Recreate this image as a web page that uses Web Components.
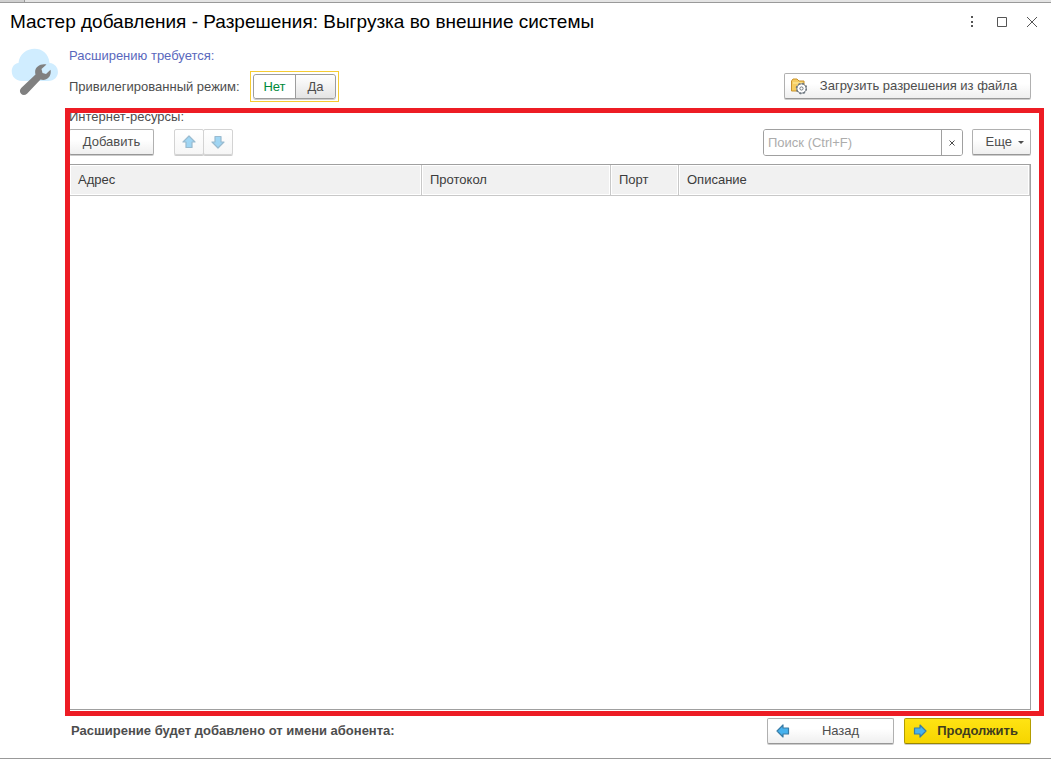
<!DOCTYPE html>
<html lang="ru">
<head>
<meta charset="utf-8">
<title>Мастер добавления</title>
<style>
html, body { height: 100%; }
body { margin: 0; background: #fff; font: 13px/16px "Liberation Sans", Arial, sans-serif; color: #4d4d4d; }
</style>
</head>
<body>
<wizard-window heading="Мастер добавления - Разрешения: Выгрузка во внешние системы">
  <permission-summary></permission-summary>
  <resource-list></resource-list>
  <wizard-footer></wizard-footer>
</wizard-window>
<script>
const define = (name, html, setup) => {
  const template = document.createElement("template");
  template.innerHTML = html;
  customElements.define(name, class extends HTMLElement {
    constructor() {
      super();
      this.attachShadow({ mode: "open" }).append(template.content.cloneNode(true));
    }
    connectedCallback() { if (setup) setup(this, this.shadowRoot); }
  });
};

define("blue-arrow", `
<style>
:host { display: block; flex: none; width: 14px; height: 14px; }
:host([direction="up"]) { transform: rotate(90deg); }
:host([direction="down"]) { transform: rotate(-90deg); }
:host([direction="right"]) { transform: rotate(180deg); }
:host([faded]) { opacity: .5; }
svg { display: block; }
</style>
<svg width="14" height="14" viewBox="0 0 14 14" aria-hidden="true"><path d="M1 7L7 1V4H12.500V10H7V13Z" fill="#47b2ee" stroke="#3a7ca5" stroke-width="1.200" stroke-linejoin="round"/></svg>`);

define("push-button", `
<style>
:host { display: block; }
button { box-sizing: border-box; display: flex; align-items: center; justify-content: center; gap: 6px; width: 100%; height: 26px; margin: 0; padding: 0 6px; border: 1px solid #b0b0b0; border-bottom-color: #979797; border-radius: 2px; background: linear-gradient(#fff 40%, #efefef); box-shadow: 0 1px 0 #ccc; font: inherit; color: #4d4d4d; white-space: nowrap; }
:host([kind="primary"]) button, :host([kind="nav"]) button { padding: 0 8px; }
:host([kind="primary"]) button { border-color: #b39d00; border-bottom-color: #9a8700; background: linear-gradient(#ffe313, #f6d500); font-weight: bold; color: #403c1e; }
:host([kind="disabled"]) button { border-color: #d3d3d3; background: linear-gradient(#fff, #f6f6f6); padding: 0; }
span { flex: 1; text-align: center; }
:host([kind="disabled"]) span { display: none; }
:host([kind="menu"]) span { text-align: right; }
::slotted(svg) { flex: none; }
</style>
<button type="button"><slot name="icon"></slot><span><slot></slot></span><slot name="after"></slot></button>`,
(host, root) => {
  const b = root.querySelector("button");
  b.disabled = host.getAttribute("kind") === "disabled";
  if (host.hasAttribute("label")) b.setAttribute("aria-label", host.getAttribute("label"));
});

define("wizard-window", `
<style>
:host { box-sizing: border-box; display: flex; flex-direction: column; min-height: 100%; border-bottom: 1px solid #999; }
.strip { height: 2px; background: linear-gradient(90deg, #d0d0d0 24px, #999 24px 25px, #e4e4e4 25px); border-bottom: 1px solid #999; }
header { display: flex; align-items: center; justify-content: space-between; height: 38px; padding: 0 11px 0 10px; }
h1 { margin: 0; font-size: 19px; line-height: 24px; font-weight: normal; color: #000; }
nav { display: flex; gap: 14px; }
nav button { display: block; width: 16px; height: 16px; padding: 0; border: 0; background: none; }
nav svg { display: block; }
main { flex: 1; display: flex; flex-direction: column; padding: 6px 20px 12px 69px; }
</style>
<div class="strip"></div>
<header><h1></h1><nav>
<button type="button" aria-label="Меню"><svg width="16" height="16" fill="#555"><path d="M7 2h2v2H7zM7 7h2v2H7zM7 11h2v2H7z"/></svg></button>
<button type="button" aria-label="Развернуть"><svg width="16" height="16" fill="none" stroke="#555"><path d="M3.500 3.500h9v9h-9z"/></svg></button>
<button type="button" aria-label="Закрыть"><svg width="16" height="16" fill="none" stroke="#555"><path d="M3 3l10 10M13 3L3 13"/></svg></button>
</nav></header>
<main><slot></slot></main>`,
(host, root) => { root.querySelector("h1").textContent = host.getAttribute("heading"); });

define("mode-switch", `
<style>
:host { display: block; border: 1px solid #f5cc32; padding: 2px; }
fieldset { display: flex; margin: 0; padding: 0; border: 1px solid #9d9d9d; border-radius: 3px; height: 23px; box-shadow: 0 1px 0 #ccc; overflow: hidden; }
label { position: relative; display: flex; align-items: center; justify-content: center; box-sizing: border-box; width: 39px; background: linear-gradient(#fff, #e4e4e4); }
label:first-of-type { width: 42px; border-right: 1px solid #9d9d9d; }
label:has(:checked) { background: #fff; color: #00893a; }
input { position: absolute; inset: 0; margin: 0; width: 100%; height: 100%; opacity: 0; }
</style>
<fieldset aria-label="Привилегированный режим">
<label><input type="radio" name="mode" checked>Нет</label>
<label><input type="radio" name="mode">Да</label>
</fieldset>`);

define("permission-summary", `
<style>
:host { position: relative; display: block; height: 61px; }
.picture { position: absolute; left: -58px; top: 1px; }
h2 { margin: 0; font-size: 13px; line-height: 18px; font-weight: normal; color: #5a68bd; }
.row { display: flex; align-items: center; gap: 8px; height: 31px; margin-top: 6px; }
.caption { min-width: 173px; }
push-button { margin-left: auto; width: 247px; height: 27px; }
</style>
<svg class="picture" width="48" height="48" viewBox="0 0 48 48" aria-hidden="true">
<path d="M11 33C-2 33-2 16 7.500 15C9-3 37-5 38.500 15C50 16 50 33 37 33Z" fill="#d0edff"/>
<path d="M35.500 16.500C29 15 22.500 19.500 24.500 26.500L10.200 40C6.500 44 11.500 49.500 16 45.800L29.500 31.500C36 33.500 41 28 39.500 21.800L35 26L31.500 25L30.500 21Z" fill="#808080"/>
</svg>
<h2>Расширению требуется:</h2>
<div class="row"><span class="caption">Привилегированный режим:</span><mode-switch></mode-switch>
<push-button>Загрузить разрешения из файла
<svg slot="icon" width="16" height="18" viewBox="0 0 16 18" aria-hidden="true"><path d="M.500 14V4L2 2H6L8 4H13V14Z" fill="#f6cd61" stroke="#c8922c"/><path d="M2 6H12" stroke="#fff0a8"/><circle cx="10.500" cy="11.500" r="4.700" fill="#fff" stroke="#6f7880"/><circle cx="10.500" cy="11.500" r="5" fill="none" stroke="#6f7880" stroke-width="1.500" stroke-dasharray="2 1.927"/><circle cx="10.500" cy="11.500" r="1.600" fill="none" stroke="#6f7880"/></svg>
</push-button></div>`);

define("search-box", `
<style>
:host { box-sizing: border-box; display: flex; width: 200px; height: 27px; border: 1px solid #a0a0a0; border-radius: 3px; overflow: hidden; }
input { flex: 1; min-width: 0; padding: 0 4px; border: 0; outline: 0; background: #fff; font: inherit; color: #333; }
input::placeholder { color: #acacac; opacity: 1; }
button { display: flex; align-items: center; justify-content: center; width: 21px; padding: 0; border: 0; border-left: 1px solid #a0a0a0; background: #fff; }
</style>
<input type="text" aria-label="Поиск" placeholder="Поиск (Ctrl+F)">
<button type="button" aria-label="Очистить"><svg width="6" height="6" stroke="#4d4d4d"><path d="M0.500 0.500l5 5M5.500 0.500l-5 5"/></svg></button>`);

define("resource-table", `
<style>
:host { display: flex; flex: 1; box-sizing: border-box; border: 1px solid #a0a0a0; }
table { width: 100%; height: 31px; border-collapse: separate; border-spacing: 0; table-layout: fixed; }
th { box-sizing: border-box; height: 31px; padding: 0 8px; border-right: 1px solid #c8c8c8; border-bottom: 1px solid #c8c8c8; background: #f1f1f1; box-shadow: inset 0 0 0 1px #fff; text-align: left; font-size: 13px; font-weight: normal; color: #3c3c3c; }
</style>
<table><colgroup><col style="width:352px"><col style="width:189px"><col style="width:68px"><col></colgroup>
<thead><tr><th scope="col">Адрес</th><th scope="col">Протокол</th><th scope="col">Порт</th><th scope="col">Описание</th></tr></thead></table>`);

define("resource-list", `
<style>
:host { position: relative; flex: 1; display: flex; flex-direction: column; }
.frame { position: absolute; inset: 0 -13px -6px -4px; border: 5px solid #ed1c24; pointer-events: none; }
h2 { margin: 0; font-size: 13px; line-height: 18px; font-weight: normal; }
.bar { display: flex; align-items: flex-start; height: 27px; margin: 3px 0 8px; }
.add { width: 85px; }
.order { display: flex; margin-left: 20px; }
.order push-button { width: 30px; }
.order push-button + push-button { margin-left: -1px; }
search-box { margin-left: auto; }
.more { width: 59px; margin-left: 9px; }
</style>
<h2>Интернет-ресурсы:</h2>
<div class="bar"><push-button class="add">Добавить</push-button>
<div class="order"><push-button kind="disabled" label="Вверх"><blue-arrow slot="icon" direction="up" faded></blue-arrow></push-button><push-button kind="disabled" label="Вниз"><blue-arrow slot="icon" direction="down" faded></blue-arrow></push-button></div>
<search-box></search-box>
<push-button class="more" kind="menu">Еще<svg slot="after" width="6" height="3" fill="#4d4d4d" aria-hidden="true"><path d="M0 0h6L3 3z"/></svg></push-button></div>
<resource-table></resource-table>
<div class="frame"></div>`);

define("wizard-footer", `
<style>
:host { display: flex; align-items: flex-start; gap: 10px; height: 28px; margin-top: 8px; }
strong { margin: 5px auto 0 2px; font-size: 13px; }
push-button { width: 127px; }
</style>
<strong>Расширение будет добавлено от имени абонента:</strong>
<push-button kind="nav"><blue-arrow slot="icon"></blue-arrow>Назад</push-button>
<push-button kind="primary"><blue-arrow slot="icon" direction="right"></blue-arrow>Продолжить</push-button>`);
</script>
</body>
</html>
